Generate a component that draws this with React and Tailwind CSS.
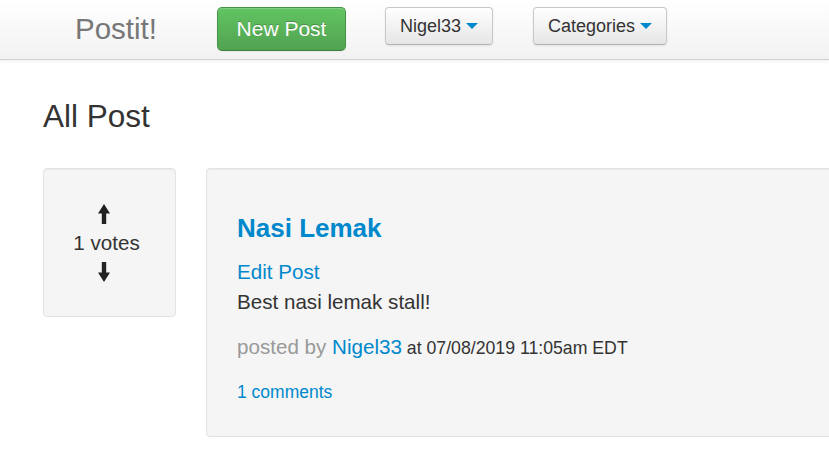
import React from "react";

function Caret() {
  return (
    <span className="inline-block w-0 h-0 border-t-[6px] border-x-[6px] border-x-transparent border-t-[#0088cc] ml-[5px]" />
  );
}

function ArrowUp() {
  return (
    <svg width="12" height="20" viewBox="0 0 12 20" className="block">
      <path d="M6 0 L12 9.5 L8.2 9.5 L8.2 20 L3.8 20 L3.8 9.5 L0 9.5 Z" fill="#222" />
    </svg>
  );
}

function ArrowDown() {
  return (
    <svg width="12" height="20" viewBox="0 0 12 20" className="block">
      <path d="M3.8 0 L8.2 0 L8.2 10.5 L12 10.5 L6 20 L0 10.5 L3.8 10.5 Z" fill="#222" />
    </svg>
  );
}

function DropButton({ label }) {
  return (
    <button className="h-[38px] flex items-center px-[14px] rounded-[4px] border border-[#c8c8c8] border-b-[#b3b3b3] bg-linear-to-b from-white to-[#e6e6e6] text-[18px] text-[#333] shadow-[inset_0_1px_0_rgba(255,255,255,0.2),0_1px_2px_rgba(0,0,0,0.08)]">
      <span>{label}</span>
      <Caret />
    </button>
  );
}

export default function App() {
  return (
    <div
      className="min-h-screen w-full overflow-hidden bg-white text-[#333]"
      style={{ fontFamily: '"Liberation Sans", Arial, sans-serif' }}
    >
      <nav className="h-[60px] border-b border-[#d0d0d0] bg-linear-to-b from-white to-[#f2f2f2] shadow-[0_1px_4px_rgba(0,0,0,0.08)] flex items-start pt-[7px] pl-[75px]">
        <div className="h-[44px] flex items-center text-[29.5px] text-[#777] leading-[34px]">
          Postit!
        </div>
        <button className="ml-[60px] h-[44px] w-[129px] flex items-center justify-center rounded-[5px] border border-[#459445] border-b-[#3b813b] bg-linear-to-b from-[#62c462] to-[#51a351] text-white text-[21px] [text-shadow:0_-1px_0_rgba(0,0,0,0.25)] shadow-[inset_0_1px_0_rgba(255,255,255,0.2),0_1px_2px_rgba(0,0,0,0.05)]">
          New Post
        </button>
        <div className="ml-[39px]">
          <DropButton label="Nigel33" />
        </div>
        <div className="ml-[40px]">
          <DropButton label="Categories" />
        </div>
      </nav>

      <main className="pl-[43px]">
        <h2 className="mt-[36px] text-[31.5px] leading-[40px] text-[#333] font-normal">
          All Post
        </h2>

        <div className="mt-[32px] flex items-start gap-[30px]">
          <div className="w-[133px] h-[149px] shrink-0 rounded-[4px] border border-[#e3e3e3] bg-[#f5f5f5] shadow-[inset_0_1px_1px_rgba(0,0,0,0.05)] flex flex-col items-center justify-center pr-[6px]">
            <div className="mr-[5px]">
              <ArrowUp />
            </div>
            <div className="mt-[7px] text-[20.6px] leading-[24px] text-[#333]">1 votes</div>
            <div className="mt-[7px] mr-[5px]">
              <ArrowDown />
            </div>
          </div>

          <div className="w-[700px] shrink-0 rounded-[4px] border border-[#e3e3e3] bg-[#f5f5f5] shadow-[inset_0_1px_1px_rgba(0,0,0,0.05)] pl-[30px] pt-[44px] pb-[31px]">
            <div className="text-[26px] leading-[30px] font-bold text-[#0088cc]">Nasi Lemak</div>
            <div className="mt-[14px] text-[20.6px] leading-[30px] text-[#0088cc]">Edit Post</div>
            <div className="text-[20.6px] leading-[30px] text-[#333]">Best nasi lemak stall!</div>
            <div className="mt-[15px] text-[20.6px] leading-[30px]">
              <span className="text-[#999]">posted by </span>
              <span className="text-[#0088cc]">Nigel33</span>
              <span className="text-[17.7px] text-[#333]"> at 07/08/2019 11:05am EDT</span>
            </div>
            <div className="mt-[17px] text-[17.5px] leading-[25px] text-[#0088cc]">1 comments</div>
          </div>
        </div>
      </main>
    </div>
  );
}
